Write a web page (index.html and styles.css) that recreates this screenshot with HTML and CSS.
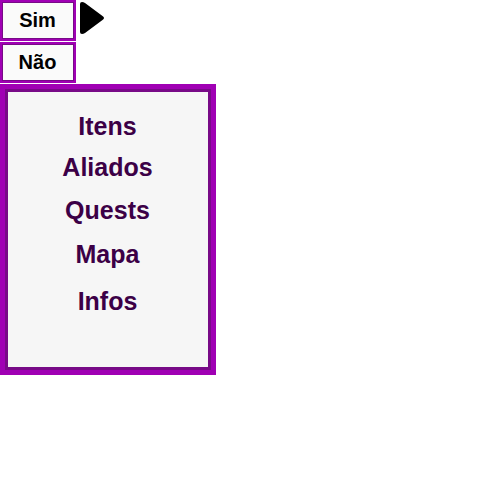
FILE: index.html
```
<!DOCTYPE html>
<html lang="pt-BR">
<head>
<meta charset="utf-8">
<title>Menu</title>
<link rel="stylesheet" href="styles.css">
</head>
<body>
<main class="screen">
  <div class="choice">
    <div class="options">
      <button class="option" type="button">Sim</button>
      <button class="option" type="button">Não</button>
    </div>
    <svg class="cursor" width="24" height="32" viewBox="0 0 24 32" aria-hidden="true">
      <path d="M0 2Q0 0 2 0Q3.500 0 5 1L22.500 14Q24 15 24 16Q24 17 22.500 18L5 31Q3.500 32 2 32Q0 32 0 30Z" fill="#000"/>
    </svg>
  </div>
  <nav class="menu">
    <button class="entry" type="button">Itens</button>
    <button class="entry" type="button">Aliados</button>
    <button class="entry" type="button">Quests</button>
    <button class="entry" type="button">Mapa</button>
    <button class="entry" type="button">Infos</button>
  </nav>
</main>
</body>
</html>
```
FILE: styles.css
```
* {
  box-sizing: border-box;
}

body {
  margin: 0;
  background: #fff;
  font-family: "Liberation Sans", Arial, sans-serif;
}

button {
  margin: 0;
  padding: 0;
  border: 0;
  background: none;
  font: inherit;
  font-weight: bold;
  cursor: pointer;
}

.screen {
  display: flex;
  flex-direction: column;
  align-items: flex-start;
  gap: 1px;
}

.choice {
  display: flex;
  gap: 4px;
}

.options {
  display: grid;
  gap: 1px;
}

.option {
  padding: 6px 17px 6px 16px;
  min-width: 76px;
  border: 2px solid #a000b4;
  box-shadow: inset 0 0 0 1px #780a87;
  background: #fafafa;
  color: #000;
  font-size: 20px;
  line-height: 25px;
}

.cursor {
  margin-top: 2px;
}

.menu {
  display: grid;
  grid-template-rows: 40px 42px 44px 44px 50px;
  width: 216px;
  max-width: 100%;
  padding: 17px 4px 44px 3px;
  border: 5px solid #a000b4;
  box-shadow: inset 0 0 0 3px #780a87;
  background: #f6f6f6;
}

.entry {
  color: #3c0046;
  font-size: 25px;
  line-height: 28px;
}
```
